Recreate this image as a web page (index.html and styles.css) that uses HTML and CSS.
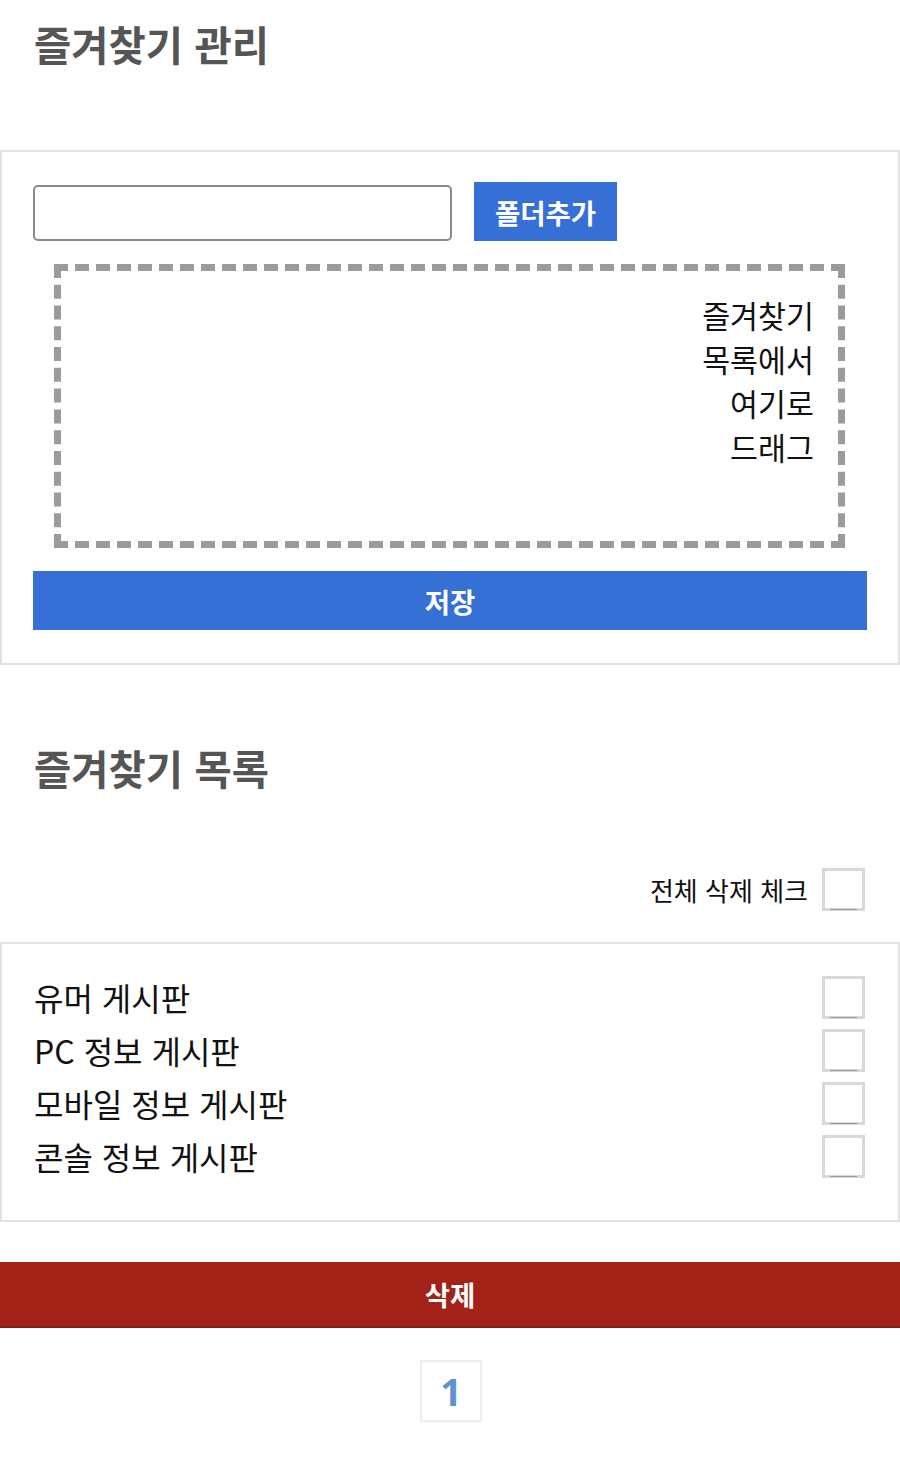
FILE: index.html
```html
<!DOCTYPE html>
<html lang="ko">
<head>
<meta charset="utf-8">
<title>즐겨찾기 관리</title>
<link rel="stylesheet" href="styles.css">
</head>
<body>
<h1 class="title title-manage">즐겨찾기 관리</h1>
<section class="panel panel-edit">
  <div class="folder-row">
    <input class="folder-input" type="text">
    <button class="btn btn-add" type="button">폴더추가</button>
  </div>
  <div class="dropzone">
    <div class="drop-hint">즐겨찾기 목록에서 여기로 드래그</div>
  </div>
  <button class="btn btn-save" type="button">저장</button>
</section>

<h2 class="title title-list">즐겨찾기 목록</h2>
<div class="check-all">
  <span class="check-all-label">전체 삭제 체크</span>
  <span class="cb"></span>
</div>
<section class="panel panel-list">
  <div class="item"><span class="item-name">유머 게시판</span><span class="cb"></span></div>
  <div class="item"><span class="item-name">PC 정보 게시판</span><span class="cb"></span></div>
  <div class="item"><span class="item-name">모바일 정보 게시판</span><span class="cb"></span></div>
  <div class="item"><span class="item-name">콘솔 정보 게시판</span><span class="cb"></span></div>
</section>
<button class="btn btn-delete" type="button">삭제</button>
<div class="pager"><span class="page">1</span></div>
</body>
</html>
```
FILE: styles.css
```css
* { box-sizing: border-box; }
body {
  margin: 0;
  background: #fff;
  font-family: "Noto Sans CJK KR", "Noto Sans", sans-serif;
  color: #111;
}
.title {
  margin: 0;
  padding: 0 34px;
  font-size: 40.5px;
  line-height: 44px;
  font-weight: 700;
  color: #555;
}
.title-manage { margin-top: 22px; }
.title-list { margin-top: 81px; }
.panel {
  border: 2px solid #e2e2e2;
}
.panel-edit {
  margin-top: 84px;
  padding: 30px 31px 33px;
}
.folder-row {
  display: flex;
  align-items: flex-end;
  gap: 22px;
}
.folder-input {
  width: 419px;
  height: 56px;
  border: 2px solid #8a8a8a;
  border-radius: 5px;
  background: #fff;
  margin: 0;
}
.btn {
  border: 0;
  margin: 0;
  color: #fff;
  font-family: "Noto Sans CJK KR", "Noto Sans", sans-serif;
  font-weight: 700;
  font-size: 27.5px;
  cursor: pointer;
}
.btn-add {
  width: 143px;
  height: 59px;
  background: #3670d6;
  padding: 0;
}
.dropzone {
  margin: 23px 22px 0 21px;
  height: 284px;
  border: 7px dashed #9b9b9b;
  display: flex;
  justify-content: flex-end;
  padding: 22px 24px 0 0;
}
.drop-hint {
  width: 130px;
  font-size: 30.4px;
  line-height: 44px;
  text-align: right;
  word-break: keep-all;
  color: #111;
}
.btn-save {
  display: block;
  width: 100%;
  height: 59px;
  margin-top: 23px;
  background: #3670d6;
}
.check-all {
  margin-top: 78px;
  padding-right: 35px;
  display: flex;
  justify-content: flex-end;
  align-items: center;
  gap: 14px;
  font-size: 26px;
}
.cb {
  position: relative;
  display: block;
  width: 43px;
  height: 43px;
  border: 3px solid #d8d8d8;
  flex: none;
}
.cb::after {
  content: "";
  position: absolute;
  left: 5px;
  right: 5px;
  bottom: -2px;
  height: 1px;
  background: #9a9a9a;
}
.panel-list {
  margin-top: 31px;
  padding: 32px 33px 42px 32px;
  display: flex;
  flex-direction: column;
  gap: 10px;
}
.item {
  display: flex;
  align-items: center;
  justify-content: space-between;
  font-size: 32px;
  line-height: 43px;
}
.btn-delete {
  display: block;
  width: 100%;
  height: 66px;
  margin-top: 40px;
  background: #a32116;
  border-bottom: 2px solid #8c1b12;
}
.pager {
  margin-top: 32px;
  display: flex;
  justify-content: center;
  padding-left: 2px;
}
.page {
  width: 62px;
  height: 62px;
  border: 2px solid #eeeeee;
  display: flex;
  align-items: center;
  justify-content: center;
  font-family: "Noto Sans", sans-serif;
  font-weight: 700;
  font-size: 38px;
  color: #5f92d2;
}
```
